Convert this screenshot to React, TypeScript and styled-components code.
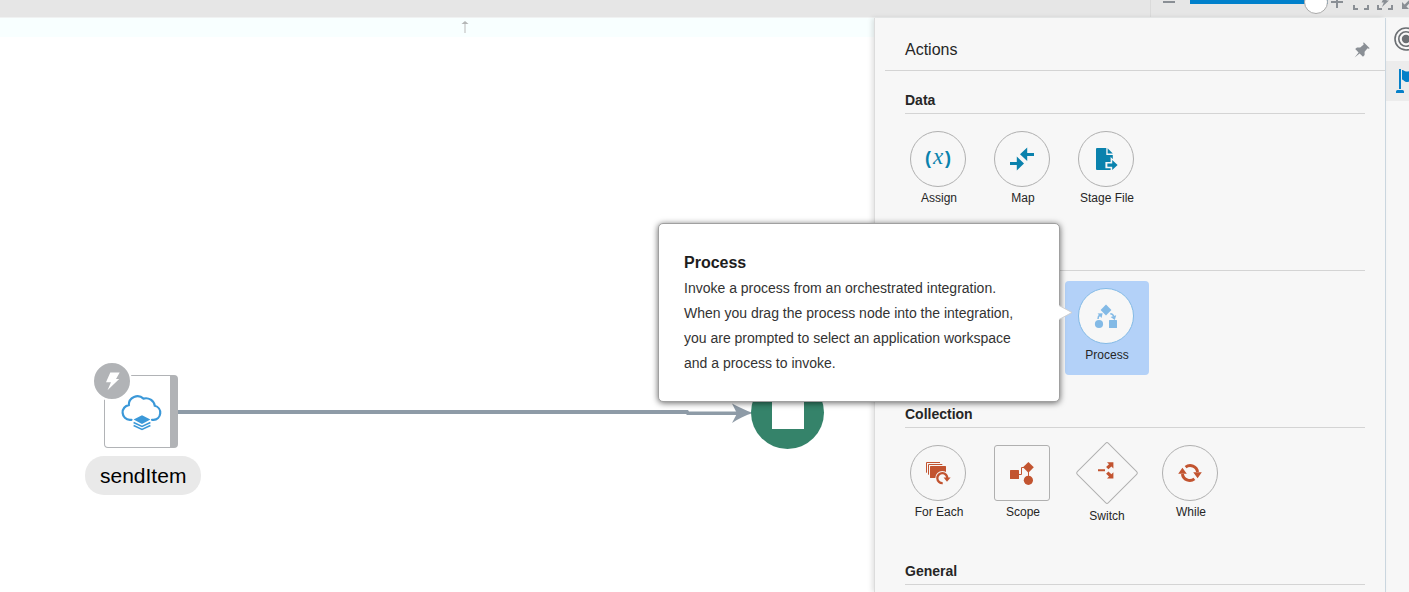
import React from 'react';
import styled, { createGlobalStyle, css } from 'styled-components';

const teal = '#0a82ad';
const rust = '#c25430';
const grey = '#8a8f95';

const GlobalStyle = createGlobalStyle`
  *, *::before, *::after { box-sizing: border-box; }
  body {
    margin: 0;
    background: #fff;
    color: #262626;
    font-family: 'Liberation Sans', Arial, sans-serif;
    font-size: 14px;
  }
  h1, h2, h3, p, ul { margin: 0; padding: 0; }
  ul { list-style: none; }
  svg { display: block; flex: none; }
`;

const Page = styled.div`
  display: flex;
  flex-direction: column;
  height: 100vh;
  overflow: hidden;
`;

const TopBar = styled.header`
  display: flex;
  justify-content: flex-end;
  align-items: flex-end;
  flex: none;
  height: 18px;
  background: #e6e6e6;
  border-bottom: 1px solid #f0f2f2;
  overflow: hidden;
`;

const ZoomControls = styled.div`
  display: flex;
  align-items: center;
  flex: none;
  width: 259px;
  height: 30px;
  padding-left: 10px;
  border-left: 1px solid #dadada;
  overflow: hidden;
`;

const plainButton = css`
  display: flex;
  flex: none;
  padding: 0;
  border: 0;
  background: none;
  color: inherit;
  font: inherit;
  cursor: pointer;
`;

const ToolButton = styled.button`
  ${plainButton}
  color: ${grey};
  margin-right: 8px;
`;

const ZoomSlider = styled.input`
  appearance: none;
  flex: none;
  width: 138px;
  height: 24px;
  margin: 0 1px 0 5px;
  background: linear-gradient(#0080cb, #0080cb) center / 100% 4px no-repeat;

  &::-webkit-slider-thumb {
    appearance: none;
    width: 24px;
    height: 24px;
    border: 1px solid #a9a9a9;
    border-radius: 50%;
    background: #fff;
  }
`;

const Workspace = styled.main`
  display: flex;
  flex: 1;
  min-height: 0;
`;

const Canvas = styled.section`
  position: relative;
  flex: 1;
  background: linear-gradient(#f8ffff, #f8ffff) top / 100% 19px no-repeat #fff;
`;

const ScrollMark = styled.svg`
  position: absolute;
  left: 461px;
  top: 3px;
`;

const Connector = styled.svg`
  position: absolute;
  left: 178px;
  top: 384px;
`;

const EndNode = styled.div`
  position: absolute;
  left: 751px;
  top: 358px;
  display: flex;
  align-items: center;
  justify-content: center;
  width: 73px;
  height: 73px;
  border-radius: 50%;
  background: #35836a;

  &::before {
    content: '';
    width: 32px;
    height: 32px;
    background: #fff;
  }
`;

const TriggerNode = styled.div`
  position: absolute;
  left: 85px;
  top: 357px;
  display: flex;
  flex-direction: column;
  align-items: center;
  gap: 8px;
`;

const TriggerCard = styled.div`
  position: relative;
  display: flex;
  align-items: center;
  justify-content: flex-end;
  width: 74px;
  height: 73px;
  margin-right: 4px;
  padding-right: 7px;
  border: 1px solid #b1b3b6;
  border-right-width: 8px;
  border-radius: 4px;
  background: #fff;
`;

const TriggerBadge = styled.span`
  position: absolute;
  left: -13px;
  top: -15px;
  border: 2px solid #fff;
  border-radius: 50%;
  background: #b1b3b6;
`;

const NodeLabel = styled.span`
  padding: 1px 15px 0;
  border-radius: 19px;
  background: #e9e9e9;
  color: #000;
  font-size: 21px;
  line-height: 38px;
`;

const ActionsPanel = styled.aside`
  position: relative;
  flex: none;
  width: 511px;
  background: #f7f7f7;
  border-left: 1px solid #dcdcdc;
  box-shadow: -2px 0 5px rgba(0, 0, 0, 0.12);
`;

const PanelHeader = styled.header`
  display: flex;
  align-items: center;
  justify-content: space-between;
  height: 53px;
  margin-left: 10px;
  padding: 12px 15px 0 20px;
  border-bottom: 1px solid #d4d4d4;
`;

const PanelTitle = styled.h1`
  font-size: 16px;
  font-weight: 400;
  line-height: 20px;
`;

const PinButton = styled.button`
  ${plainButton}
  color: ${grey};
`;

const Group = styled.section`
  margin: 19px 20px 29px 30px;

  & + & { margin-top: 0; }
`;

const GroupTitle = styled.h2`
  height: 24px;
  border-bottom: 1px solid #d4d4d4;
  font-size: 14px;
  font-weight: 700;
  line-height: 20px;
`;

const Tiles = styled.ul`
  display: grid;
  grid-template-columns: repeat(auto-fill, 84px);
  margin: 10px 0 0 -8px;
`;

const TileCell = styled.li<{ $column?: number }>`
  position: relative;
  grid-column: ${p => p.$column ?? 'auto'};
`;

const TileButton = styled.button<{ $active?: boolean; $tall?: boolean }>`
  ${plainButton}
  flex-direction: column;
  align-items: center;
  gap: 3px;
  width: 84px;
  height: 94px;
  padding-top: ${p => (p.$tall ? 3 : 7)}px;
  border-radius: 4px;
  background: ${p => (p.$active ? '#b3d1f8' : 'none')};
  font-size: 12px;
  line-height: 16px;
`;

const Frame = styled.span<{ $shape: 'circle' | 'square'; $color: string; $active?: boolean }>`
  display: flex;
  align-items: center;
  justify-content: center;
  width: 56px;
  height: 56px;
  margin-right: 2px;
  border: 1px solid ${p => (p.$active ? '#83bae6' : '#b0b0b0')};
  border-radius: ${p => (p.$shape === 'circle' ? '50%' : '3px')};
  background: #f7f7f7;
  color: ${p => p.$color};
`;

const Tooltip = styled.div`
  position: absolute;
  z-index: 2;
  right: calc(100% + 5px);
  top: -58px;
  width: 402px;
  padding: 26px 25px 25px;
  border: 1px solid #a0a0a0;
  border-radius: 5px;
  background: #fff;
  box-shadow: 0 1px 6px rgba(0, 0, 0, 0.6);
  color: #333;
  line-height: 25px;
`;

const TooltipTitle = styled.h3`
  padding-bottom: 1px;
  color: #1d1d1d;
  font-size: 16px;
`;

const TooltipArrow = styled.svg`
  position: absolute;
  left: 100%;
  top: 80px;
`;

const Rail = styled.nav`
  flex: none;
  width: 24px;
  background: #f7f7f7;
  border-left: 1px solid #cfdbe4;
  overflow: hidden;
`;

const RailButton = styled.button<{ $selected?: boolean }>`
  ${plainButton}
  align-items: center;
  width: 40px;
  height: ${p => (p.$selected ? 40 : 43)}px;
  padding: ${p => (p.$selected ? '0 0 0 8px' : '0 0 2px 8px')};
  background: ${p => (p.$selected ? '#ececec' : 'none')};
  color: ${p => (p.$selected ? '#0580c9' : '#6b6f73')};
`;

const Corners = () => (
  <path d="M1 5V1h4M11 1h4v4M15 11v4h-4M5 15H1v-4" fill="none" stroke="currentColor" strokeWidth="2" />
);

const FormulaIcon = () => (
  <svg width="28" height="28" viewBox="0 0 28 28" fill="currentColor" textAnchor="middle">
    <text x="4" y="19" fontSize="18" fontWeight="700" fontFamily="'Liberation Sans', sans-serif">(</text>
    <text x="14" y="19" fontSize="23" fontStyle="italic" fontFamily="'Liberation Serif', serif">x</text>
    <text x="24" y="19" fontSize="18" fontWeight="700" fontFamily="'Liberation Sans', sans-serif">)</text>
  </svg>
);

const MapIcon = () => (
  <svg width="28" height="28" viewBox="0 0 28 28" fill="currentColor">
    <path d="M2 17h6.8v-5.4L16 18.5 8.8 25.4V20H2z" />
    <path d="M26 8h-6.8V2.5L12 9.3l7.2 6.6V11H26z" />
  </svg>
);

const StageFileIcon = () => (
  <svg width="28" height="28" viewBox="0 0 28 28" fill="currentColor">
    <path d="M4 4a1 1 0 0 1 1-1h9.3v7h6.5v15H5a1 1 0 0 1-1-1z" />
    <path d="M15.6 3.2l5.2 5.4h-5.2z" />
    <path d="M14.6 18.2h5.2v-3.4l5.8 5.2-5.8 5.4V22h-5.2z" stroke="#f7f7f7" strokeWidth="2.4" />
    <path d="M15.4 18.4h4.8v-3.4l5.4 5-5.4 5v-3.200h-4.8z" />
  </svg>
);

const ProcessIcon = () => (
  <svg width="28" height="28" viewBox="0 0 28 28" fill="currentColor">
    <path d="M14 2.6L19.4 8 14 13.4 8.6 8z" />
    <circle cx="7" cy="22" r="4.1" />
    <rect x="17" y="18" width="8" height="8" rx="0.5" />
    <path d="M6 17c0-2 .6-3.2 2-4" fill="none" stroke="currentColor" strokeWidth="1.5" />
    <path d="M5.6 11.4l5-.2-1 4.9z" />
    <path d="M18.3 11.7c2 .2 3 1 3.3 2.6" fill="none" stroke="currentColor" strokeWidth="1.5" />
    <path d="M18.6 15l5.6-1.8-1.400 4.800z" />
  </svg>
);

const ForEachIcon = () => (
  <svg width="28" height="28" viewBox="0 0 28 28" fill="currentColor">
    <path d="M2.500 13.700V3.500H16M4.500 15.700V5.500h13.800" fill="none" stroke="currentColor" />
    <rect x="6" y="7" width="16" height="12" rx="0.5" />
    <circle cx="18.300" cy="19" r="7" fill="#f7f7f7" />
    <path d="M18.700 24.200a5 5 0 1 1 4.600-4.600" fill="none" stroke="currentColor" strokeWidth="2.300" />
    <path d="M19.600 18.500H26.600L23 22.800z" />
  </svg>
);

const ScopeIcon = () => (
  <svg width="28" height="28" viewBox="0 0 28 28" fill="currentColor">
    <rect x="2" y="11" width="9" height="9" rx="0.5" />
    <path d="M20.400 2.900l5.400 5.400-5.400 5.400L15 8.300z" />
    <circle cx="20.400" cy="21.300" r="4.600" />
    <path d="M11 15.500h2.500v-7H16M20.500 13v4" fill="none" stroke="currentColor" />
  </svg>
);

const WhileIcon = () => (
  <svg width="28" height="28" viewBox="0 0 28 28" fill="currentColor">
    <path d="M9.600 8.100A7.500 7.500 0 0 1 21.600 13M18.400 19.900A7.500 7.500 0 0 1 6.400 15" fill="none" stroke="currentColor" strokeWidth="3" />
    <path d="M2.200 14.700L6.400 8.700l4.400 6zM17.200 13.300h8.600l-4.200 6z" />
  </svg>
);

const SwitchDiamond = () => (
  <svg width="64" height="64" viewBox="0 0 64 64">
    <rect x="10" y="10" width="44" height="44" rx="2" transform="rotate(45 32 32)" fill="none" stroke="#b0b0b0" />
    <path
      d="M23 28.200h7v2h-7zM32 21.200h6.400v6.400l-2-2-3 2.700-2.300-2.200 2.900-2.900zM32 37.600h6.400v-6.400l-2 2-3-2.700-2.300 2.200 2.900 2.900z"
      fill={rust}
    />
  </svg>
);

const CloudStackIcon = () => (
  <svg width="42" height="38" viewBox="0 0 42 38" fill="none" stroke="#3b98d8" strokeWidth="2.200">
    <path d="M10.500 26.800H8.800a7.400 7.400 0 0 1-1-14.700A8.700 8.700 0 0 1 22.500 5.600a9 9 0 0 1 11.300 7.200 7.100 7.100 0 0 1-1.300 14H31" strokeLinecap="round" />
    <path d="M21 22.200l8.400 4.300-8.400 4.400-8.400-4.400z" fill="#3b98d8" stroke="none" />
    <path d="M12.600 29.500l8.400 4 8.400-4M12.600 32.500l8.400 4 8.400-4" strokeWidth="1.500" />
  </svg>
);

type TileProps = {
  label: string;
  icon: React.ReactNode;
  color: string;
  shape?: 'circle' | 'square';
  active?: boolean;
  column?: number;
  children?: React.ReactNode;
};

const Tile = ({ label, icon, color, shape = 'circle', active, column, children }: TileProps) => (
  <TileCell $column={column}>
    <TileButton type="button" $active={active}>
      <Frame $shape={shape} $color={color} $active={active}>{icon}</Frame>
      {label}
    </TileButton>
    {children}
  </TileCell>
);

export default function App() {
  return (
    <Page>
      <GlobalStyle />
      <TopBar>
        <ZoomControls>
          <ToolButton type="button">
            <svg width="16" height="16" viewBox="0 0 16 16"><path d="M2 8h12" stroke="currentColor" strokeWidth="2" /></svg>
          </ToolButton>
          <ZoomSlider type="range" min={0} max={100} defaultValue={100} />
          <ToolButton type="button">
            <svg width="16" height="16" viewBox="0 0 16 16"><path d="M2 8h12M8 2v12" stroke="currentColor" strokeWidth="2" /></svg>
          </ToolButton>
          <ToolButton type="button">
            <svg width="16" height="16" viewBox="0 0 16 16"><Corners /></svg>
          </ToolButton>
          <ToolButton type="button">
            <svg width="16" height="16" viewBox="0 0 16 16">
              <Corners />
              <path d="M8 2h4L9.500 6.500h2.500L5 13l1.800-4.500H4.500z" fill="currentColor" />
            </svg>
          </ToolButton>
          <ToolButton type="button">
            <svg width="16" height="16" viewBox="0 0 16 16">
              <path d="M3 13L14 2" stroke="currentColor" strokeWidth="2.500" />
              <path d="M1 8v7h7z" fill="currentColor" />
            </svg>
          </ToolButton>
        </ZoomControls>
      </TopBar>

      <Workspace>
        <Canvas>
          <ScrollMark width="8" height="12" viewBox="0 0 8 12">
            <path d="M4 2v10" stroke="#d9dcdc" strokeWidth="2" />
            <path d="M4 0l3.500 3h-7z" fill="#b4b6b6" />
          </ScrollMark>
          <Connector width="576" height="24" viewBox="0 0 576 24" fill="#8e9ba7">
            <path d="M0 8h510l1 1.500h52v3.500h-54l-1-1H0z" />
            <path d="M554 1.500c6 3 14 7 21 9.500-7 2-15 6-21 10l5-9.500z" />
          </Connector>
          <EndNode />
          <TriggerNode>
            <TriggerCard>
              <CloudStackIcon />
              <TriggerBadge>
                <svg width="36" height="36" viewBox="0 0 36 36"><path d="M16.300 9.500h9.400L22 16h3.200L13.500 27.300l3.500-8h-5z" fill="#fff" /></svg>
              </TriggerBadge>
            </TriggerCard>
            <NodeLabel>sendItem</NodeLabel>
          </TriggerNode>
        </Canvas>

        <ActionsPanel>
          <PanelHeader>
            <PanelTitle>Actions</PanelTitle>
            <PinButton type="button">
              <svg width="16" height="16" viewBox="0 0 16 16">
                <path d="M9.700.3l6 6-1.100.5-1-.5-3 3.500V13L9 14.800l-3.400-3.400-5 4.100 4-5.100L1.200 7 3 5.400h3.200l3.500-3-.5-1.200z" fill="currentColor" />
              </svg>
            </PinButton>
          </PanelHeader>

          <Group>
            <GroupTitle>Data</GroupTitle>
            <Tiles>
              <Tile label="Assign" color={teal} icon={<FormulaIcon />} />
              <Tile label="Map" color={teal} icon={<MapIcon />} />
              <Tile label="Stage File" color={teal} icon={<StageFileIcon />} />
            </Tiles>
          </Group>

          <Group>
            <GroupTitle />
            <Tiles>
              <Tile label="Process" color="#83bae6" icon={<ProcessIcon />} active column={3}>
                <Tooltip role="tooltip">
                  <TooltipTitle>Process</TooltipTitle>
                  <p>
                    Invoke a process from an orchestrated integration. When you drag the process node into the
                    integration, you are prompted to select an application workspace and a process to invoke.
                  </p>
                  <TooltipArrow width="14" height="18" viewBox="0 0 14 18">
                    <path d="M0 1.500L13 8.500 0 15.500z" fill="#fff" />
                    <path d="M0 1.500L13 8.500 0 15.500" fill="none" stroke="#d0d0d0" />
                  </TooltipArrow>
                </Tooltip>
              </Tile>
            </Tiles>
          </Group>

          <Group>
            <GroupTitle>Collection</GroupTitle>
            <Tiles>
              <Tile label="For Each" color={rust} icon={<ForEachIcon />} />
              <Tile label="Scope" color={rust} icon={<ScopeIcon />} shape="square" />
              <TileCell>
                <TileButton type="button" $tall>
                  <SwitchDiamond />
                  Switch
                </TileButton>
              </TileCell>
              <Tile label="While" color={rust} icon={<WhileIcon />} />
            </Tiles>
          </Group>

          <Group>
            <GroupTitle>General</GroupTitle>
          </Group>
        </ActionsPanel>

        <Rail>
          <RailButton type="button">
            <svg width="24" height="24" viewBox="0 0 24 24" fill="none" stroke="currentColor">
              <circle cx="12" cy="12" r="11" strokeWidth="1.600" />
              <circle cx="12" cy="12" r="7.200" strokeWidth="1.600" />
              <circle cx="12" cy="12" r="4.200" fill="currentColor" stroke="none" />
            </svg>
          </RailButton>
          <RailButton type="button" $selected>
            <svg width="24" height="24" viewBox="0 0 24 24" fill="currentColor">
              <path d="M5 0h2v20H5zM2 22.500A1.500 1.500 0 0 1 3.500 21h5a1.500 1.500 0 0 1 1.500 1.500V24H2z" />
              <path d="M8 1c2 0 2 1.500 5 1.500S18 1 22 1v10c-4 0-5 2-8.500 2S10 11 8 10.500z" />
            </svg>
          </RailButton>
        </Rail>
      </Workspace>
    </Page>
  );
}
